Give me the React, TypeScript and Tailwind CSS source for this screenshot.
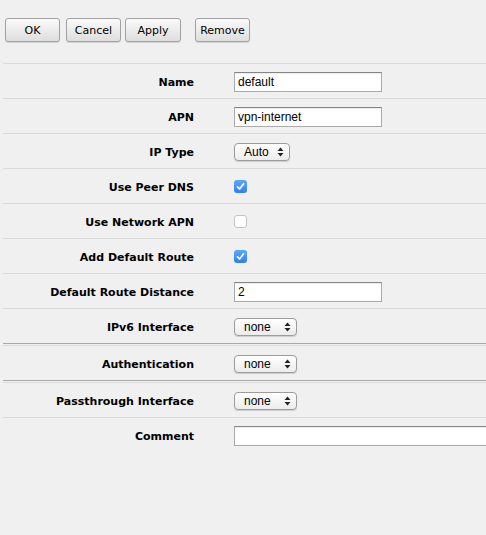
import React from 'react';

const labelFont = { fontFamily: '"DejaVu Sans", Verdana, sans-serif' };
const ctrlFont = { fontFamily: '"Liberation Sans", Arial, sans-serif' };

const Btn = ({ label, className = '' }: { label: string; className?: string }) => (
  <button
    style={labelFont}
    className={`h-[24px] w-[55px] rounded-[3px] border border-[#a2a2a2] bg-gradient-to-b from-[#fafafa] to-[#dedede] pt-[2px] text-[11px] text-black shadow-[0_1px_1px_rgba(0,0,0,0.12)] ${className}`}
  >
    {label}
  </button>
);

const TextInput = ({ value, wide }: { value: string; wide?: boolean }) => (
  <div
    style={ctrlFont}
    className={`flex h-[20px] shrink-0 items-center border border-[#aaaaaa] border-t-[#858585] bg-white pl-[3px] text-[12px] text-black shadow-[inset_0_1px_1px_rgba(0,0,0,0.08)] ${wide ? 'w-[260px]' : 'w-[148px]'}`}
  >
    {value}
  </div>
);

const Select = ({ value, width }: { value: string; width: string }) => (
  <div
    style={ctrlFont}
    className={`flex h-[18px] items-center justify-between rounded-[4px] border border-[#9c9c9c] bg-gradient-to-b from-white to-[#ececec] pl-[9px] pr-[5px] text-[12px] text-black shadow-[0_1px_1px_rgba(0,0,0,0.15)] ${width}`}
  >
    <span>{value}</span>
    <svg width="7" height="10" viewBox="0 0 7 10">
      <path d="M3.5 0.5 L6.5 4 H0.5 Z" fill="#222" />
      <path d="M3.5 9.5 L6.5 6 H0.5 Z" fill="#222" />
    </svg>
  </div>
);

const Check = ({ on }: { on: boolean }) =>
  on ? (
    <div className="flex h-[13px] w-[13px] items-center justify-center rounded-[3px] bg-gradient-to-b from-[#5aa8ff] to-[#2f7ff2]">
      <svg width="9" height="9" viewBox="0 0 9 9">
        <path d="M1.5 4.8 L3.6 7 L7.6 1.8" fill="none" stroke="white" strokeWidth="1.7" strokeLinecap="round" strokeLinejoin="round" />
      </svg>
    </div>
  ) : (
    <div className="h-[13px] w-[13px] rounded-[3px] border border-[#c4c4c4] bg-white" />
  );

const Row = ({ label, children, sep = 'line' }: { label: string; children: React.ReactNode; sep?: 'line' | 'double' | 'none' }) => (
  <>
    <div className="flex h-[34px] items-center pt-px">
      <div style={labelFont} className="w-[191px] shrink-0 pt-[3px] text-right text-[11px] font-bold text-black">
        {label}
      </div>
      <div className="ml-[40px] flex shrink-0 items-center">{children}</div>
    </div>
    {sep === 'line' && <div className="h-px bg-[#d9d9d9]" />}
    {sep === 'double' && (
      <div className="flex flex-col">
        <div className="h-px bg-[#a9a9a9]" />
        <div className="h-px bg-[#f0f0f0]" />
        <div className="h-px bg-[#dcdcdc]" />
      </div>
    )}
  </>
);

export default function App() {
  return (
    <div className="h-[535px] w-[486px] overflow-hidden bg-[#f0f0f0]">
      {/* Toolbar */}
      <div className="flex pl-[5px] pt-[18px]">
        <Btn label="OK" />
        <Btn label="Cancel" className="ml-[6px]" />
        <Btn label="Apply" className="ml-[4px] w-[56px]" />
        <Btn label="Remove" className="ml-[14px]" />
      </div>

      {/* Form */}
      <div className="ml-[3px] mt-[21px]">
        <div className="h-px bg-[#d9d9d9]" />
        <Row label="Name"><TextInput value="default" /></Row>
        <Row label="APN"><TextInput value="vpn-internet" /></Row>
        <Row label="IP Type"><Select value="Auto" width="w-[56px]" /></Row>
        <Row label="Use Peer DNS"><Check on /></Row>
        <Row label="Use Network APN"><Check on={false} /></Row>
        <Row label="Add Default Route"><Check on /></Row>
        <Row label="Default Route Distance"><TextInput value="2" /></Row>
        <Row label="IPv6 Interface" sep="double"><Select value="none" width="w-[63px]" /></Row>
        <Row label="Authentication" sep="double"><Select value="none" width="w-[63px]" /></Row>
        <Row label="Passthrough Interface"><Select value="none" width="w-[63px]" /></Row>
        <Row label="Comment" sep="none"><TextInput value="" wide /></Row>
      </div>
    </div>
  );
}
